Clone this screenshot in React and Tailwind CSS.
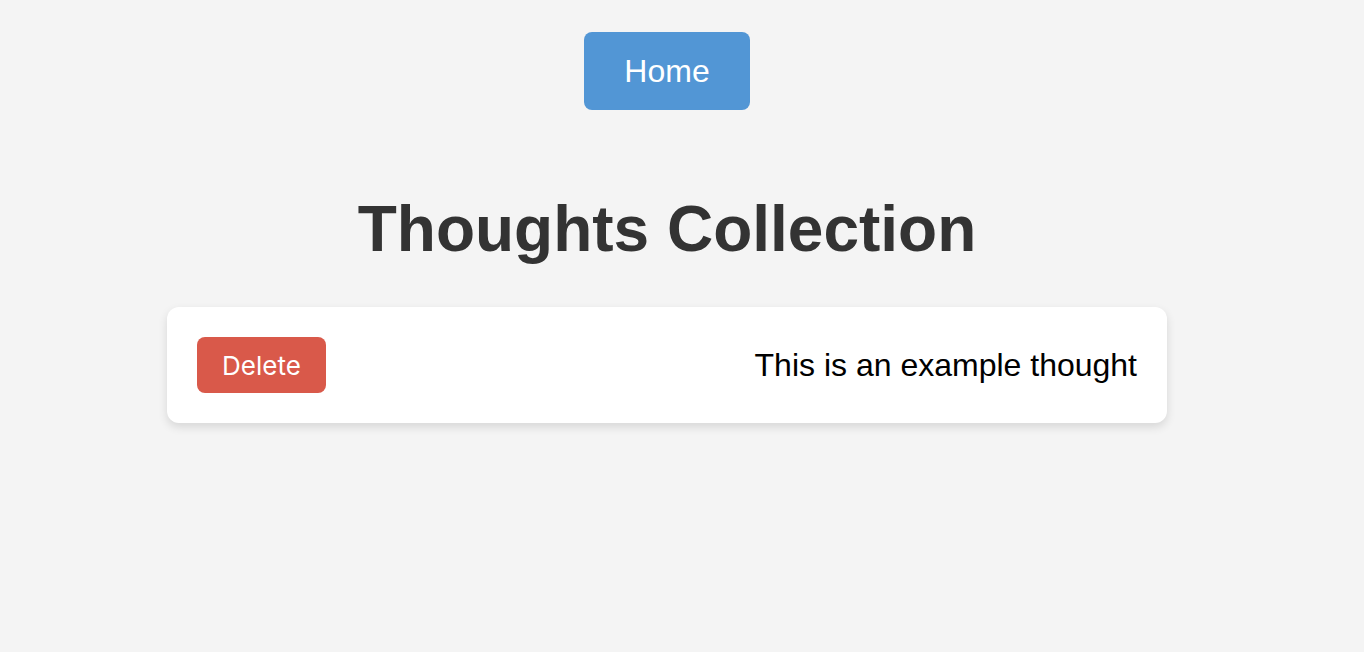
import React from 'react';

const App = () => {
    return (
        <div className="min-h-screen bg-[#f4f4f4] font-['Liberation_Sans',Arial,sans-serif] pr-[30px] flex flex-col items-center">
            <nav className="pt-8">
                <button className="bg-[#5296d5] text-white text-[32px] leading-[38px] px-10 py-5 rounded-lg">
                    Home
                </button>
            </nav>

            <h1 className="mt-[82px] text-[64px] leading-[74px] font-bold text-[#333333]">
                Thoughts Collection
            </h1>

            <div className="mt-[41px] w-[1000px] bg-white rounded-xl shadow-[0_4px_10px_rgba(0,0,0,0.12)] p-[30px] flex items-center justify-between">
                <button className="bg-[#d9594a] text-white font-['Inter',sans-serif] text-[26px] h-14 px-[25px] rounded-lg">
                    Delete
                </button>
                <p className="text-[32px] text-black">This is an example thought</p>
            </div>
        </div>
    );
};

export default App;
